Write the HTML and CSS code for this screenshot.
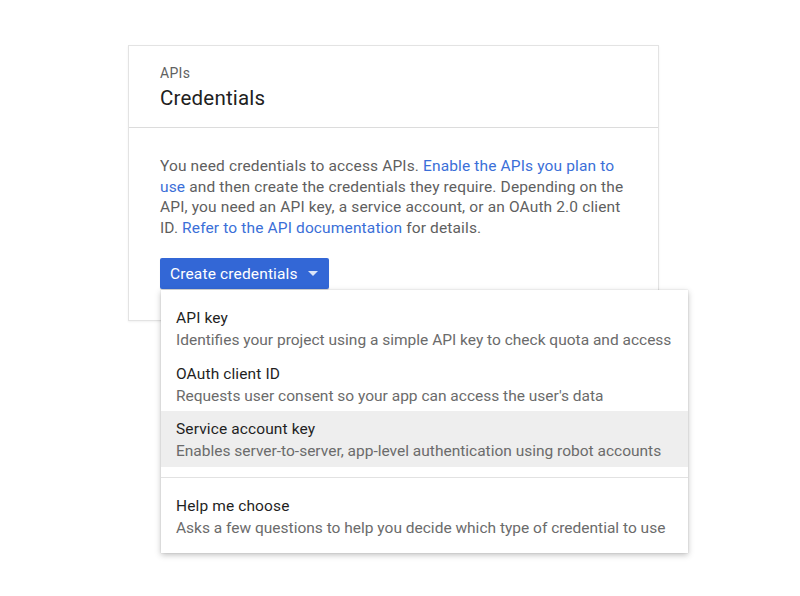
FILE: index.html
```html
<!DOCTYPE html>
<html>
<head>
<meta charset="utf-8">
<link rel="stylesheet" href="styles.css">
</head>
<body>
<div class="page">
  <div class="card">
    <div class="card-header">
      <div class="eyebrow">APIs</div>
      <div class="title">Credentials</div>
    </div>
    <div class="card-body">
      <p class="intro">You need credentials to access APIs. <a href="#">Enable the APIs you plan to use</a> and then create the credentials they require. Depending on the API, you need an API key, a service account, or an OAuth 2.0 client ID. <a href="#">Refer to the API documentation</a> for details.</p>
      <div class="dropdown">
        <button class="btn">Create credentials <span class="caret"></span></button>
        <div class="menu">
          <div class="item">
            <div class="item-title">API key</div>
            <div class="item-desc">Identifies your project using a simple API key to check quota and access</div>
          </div>
          <div class="item">
            <div class="item-title">OAuth client ID</div>
            <div class="item-desc">Requests user consent so your app can access the user's data</div>
          </div>
          <div class="item active">
            <div class="item-title">Service account key</div>
            <div class="item-desc">Enables server-to-server, app-level authentication using robot accounts</div>
          </div>
          <div class="sep"></div>
          <div class="item">
            <div class="item-title">Help me choose</div>
            <div class="item-desc">Asks a few questions to help you decide which type of credential to use</div>
          </div>
        </div>
      </div>
    </div>
  </div>
</div>
</body>
</html>
```

FILE: styles.css
```css
html, body {
  margin: 0;
  padding: 0;
  background: #fff;
}
body {
  min-height: 596px;
  font-family: Roboto, "Liberation Sans", Arial, sans-serif;
  -webkit-font-smoothing: antialiased;
}
.page {
  padding: 45px 0 0 128px;
  min-height: 551px;
}
.card {
  width: 529px;
  height: 274px;
  border: 1px solid #e3e3e3;
  box-shadow: 0 1px 2px rgba(0,0,0,0.06);
  background: #fff;
}
.card-header {
  height: 82px;
  border-bottom: 1px solid #dcdcdc;
  padding: 18px 0 0 31px;
  box-sizing: border-box;
}
.eyebrow {
  font-size: 14px;
  line-height: 18px;
  letter-spacing: 0.3px;
  color: #616161;
}
.title {
  font-size: 20.5px;
  line-height: 26px;
  letter-spacing: 0.2px;
  margin-top: 3px;
  color: #212121;
}
.card-body {
  padding: 28px 31px 0 31px;
}
.intro {
  margin: 0;
  font-size: 15.5px;
  letter-spacing: 0.14px;
  line-height: 20.6px;
  color: #5f5f5f;
  width: 470px;
}
.intro a {
  color: #3b6fd8;
  text-decoration: none;
}
.dropdown {
  position: relative;
  margin-top: 20px;
}
.btn {
  display: flex;
  align-items: center;
  height: 31px;
  padding: 0 11px 0 10px;
  border: none;
  border-radius: 2px;
  background: #3367d6;
  color: #fff;
  font-family: inherit;
  font-size: 15.5px;
  letter-spacing: 0.15px;
  cursor: pointer;
  box-shadow: 0 1px 1px rgba(0,0,0,0.15);
}
.caret {
  display: inline-block;
  margin-left: 10px;
  width: 0;
  height: 0;
  border-left: 5px solid transparent;
  border-right: 5px solid transparent;
  border-top: 5px solid #dbe5f8;
}
.menu {
  position: absolute;
  top: 32px;
  left: 1px;
  width: 527px;
  background: #fff;
  padding: 10px 0 10px;
  box-shadow: 0 2px 6px rgba(0,0,0,0.25), 0 0 1px rgba(0,0,0,0.2);
  z-index: 2;
}
.item {
  padding: 8px 15px 4.5px 15px;
  white-space: nowrap;
}
.item.active {
  background: #eeeeee;
}
.item-title {
  font-size: 15.5px;
  letter-spacing: 0.12px;
  line-height: 21px;
  color: #1f1f1f;
}
.item-desc {
  font-size: 15.5px;
  letter-spacing: 0;
  line-height: 22px;
  color: #6b6b6b;
}
.sep {
  height: 1px;
  background: #e2e2e2;
  margin: 10px 0 10px;
}
```
